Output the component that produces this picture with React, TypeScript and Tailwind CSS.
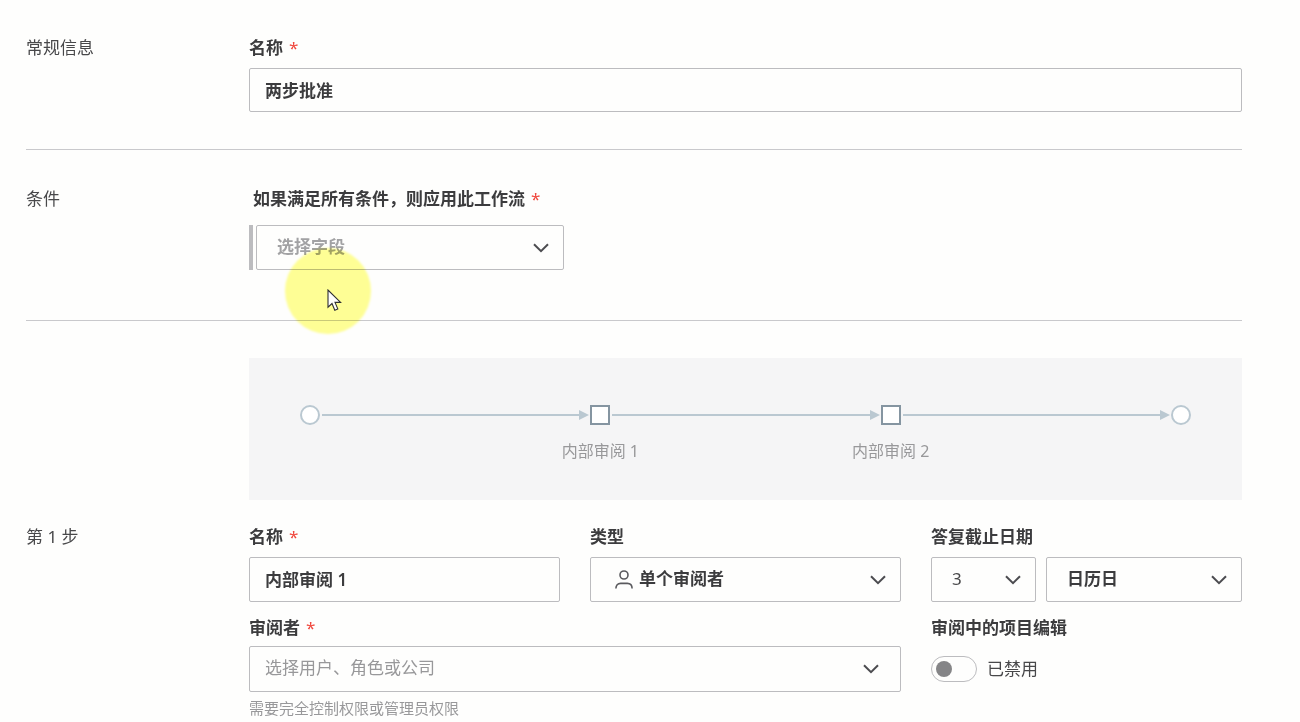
import { useState } from 'react'
import type { ReactNode, SelectHTMLAttributes } from 'react'

const LABEL = 'block text-[17px] leading-6 font-semibold text-[#3c3c3e]'
const BOX =
  'w-full rounded-xs border border-[#bcbcbf] bg-[#fefefd] pb-[2px] text-[17px] leading-6 outline-none focus:border-[#7d8a94]'

function Required() {
  return (
    <span className="ml-[6px] font-normal text-[#f0463c]" aria-hidden="true">
      *
    </span>
  )
}

function ChevronIcon() {
  return (
    <svg width="16" height="10" viewBox="0 0 16 10" fill="none">
      <path d="M1 1.2 8 8.2l7-7" stroke="#4c4c50" strokeWidth="2" />
    </svg>
  )
}

function PersonIcon() {
  return (
    <svg width="18" height="20" viewBox="0 0 18 20" fill="none" stroke="#5a5a5e" strokeWidth="1.6">
      <circle cx="9" cy="5" r="4" />
      <path d="M.9 18.6c0-3.4 1.8-5.2 4.8-5.2h6.6c3 0 4.8 1.8 4.8 5.2" />
    </svg>
  )
}

interface SelectBoxProps extends SelectHTMLAttributes<HTMLSelectElement> {
  options: string[]
  icon?: ReactNode
  wide?: boolean
}

function SelectBox({ options, icon, wide, className = '', ...rest }: SelectBoxProps) {
  return (
    <div className="relative flex-1">
      {icon && (
        <span className="pointer-events-none absolute inset-y-0 left-[25px] flex items-center">{icon}</span>
      )}
      <select className={`${BOX} appearance-none ${className}`} {...rest}>
        {options.map((option) => (
          <option key={option}>{option}</option>
        ))}
      </select>
      <span
        className={`pointer-events-none absolute inset-y-0 flex items-center ${wide ? 'right-[22px]' : 'right-[15px]'}`}
      >
        <ChevronIcon />
      </span>
    </div>
  )
}

function Section({ title, children, className = '' }: { title?: string; children: ReactNode; className?: string }) {
  return (
    <section className={`flex ${className}`}>
      <h2 className="w-[223px] shrink-0 text-[17px] leading-6 text-[#48484a]">{title}</h2>
      <div className="min-w-0 flex-1">{children}</div>
    </section>
  )
}

function Arrow() {
  return (
    <div className="ml-[2px] flex h-5 flex-1 items-center">
      <div className="h-[2px] flex-1 bg-[#bac8d1]" />
      <svg width="10" height="10" viewBox="0 0 10 10" className="mr-px">
        <path d="M0 0l10 5-10 5z" fill="#bac8d1" />
      </svg>
    </div>
  )
}

function StepNode({ name }: { name: string }) {
  return (
    <div className="flex w-5 flex-col items-center gap-[14px]">
      <div className="size-5 border-2 border-[#8595a1] bg-white" />
      <span className="text-base leading-6 whitespace-nowrap text-[#98989a]">{name}</span>
    </div>
  )
}

function WorkflowDiagram({ steps }: { steps: string[] }) {
  return (
    <div className="flex h-[142px] items-start bg-[#f5f5f6] px-[51px] pt-[47px]">
      <div className="size-5 rounded-full border-2 border-[#bac8d1] bg-white" />
      {steps.map((step) => (
        <div key={step} className="flex flex-1">
          <Arrow />
          <StepNode name={step} />
        </div>
      ))}
      <div className="flex flex-1">
        <Arrow />
        <div className="size-5 rounded-full border-2 border-[#bac8d1] bg-white" />
      </div>
    </div>
  )
}

function Pointer() {
  return (
    <div className="pointer-events-none absolute top-[62px] left-9">
      <div className="size-[86px] rounded-full bg-[#ffff96] blur-[1px]" />
      <svg width="15" height="23" viewBox="0 0 15 23" className="absolute top-[41px] left-[42px]">
        <path
          d="M1 1v17.2l4-3.7 2.8 6.7 3-1.3L8 13.4h5.6z"
          fill="#fff"
          stroke="#2f2f33"
          strokeWidth="1.1"
        />
      </svg>
    </div>
  )
}

export default function App() {
  const [name, setName] = useState('两步批准')
  const [stepName, setStepName] = useState('内部审阅 1')
  const [editing, setEditing] = useState(false)

  return (
    <form className="min-h-screen bg-[#fefefd] pr-[58px] pl-[26px] font-['Noto_Sans','Noto_Sans_CJK_SC',sans-serif]">
      <Section title="常规信息" className="border-b border-[#c9c9cc] pt-9 pb-[37px]">
        <label htmlFor="name" className={LABEL}>
          名称
          <Required />
        </label>
        <input
          id="name"
          className={`${BOX} mt-2 h-11 px-[15px] font-semibold text-[#3c3c3e]`}
          value={name}
          onChange={(e) => setName(e.target.value)}
        />
      </Section>

      <Section title="条件" className="border-b border-[#c9c9cc] pt-[37px] pb-[50px]">
        <label htmlFor="condition" className={`${LABEL} pl-1`}>
          如果满足所有条件，则应用此工作流
          <Required />
        </label>
        <div className="relative mt-[14px] w-[315px]">
          <div className="flex border-l-4 border-[#bcbcbf] pl-[3px]">
            <SelectBox
              id="condition"
              options={['选择字段']}
              className="h-[45px] pr-10 pl-5 font-semibold text-[#a2a2a4]"
            />
          </div>
          <div className="absolute -top-[39px] left-0 mix-blend-multiply">
            <Pointer />
          </div>
        </div>
      </Section>

      <Section className="pt-[37px]">
        <WorkflowDiagram steps={['内部审阅 1', '内部审阅 2']} />
      </Section>

      <Section title="第 1 步" className="pt-[25px]">
        <div className="grid grid-cols-3 gap-x-[30px] gap-y-[14px]">
          <div>
            <label htmlFor="step-name" className={LABEL}>
              名称
              <Required />
            </label>
            <input
              id="step-name"
              className={`${BOX} mt-2 h-[45px] px-[15px] font-semibold text-[#3c3c3e]`}
              value={stepName}
              onChange={(e) => setStepName(e.target.value)}
            />
          </div>
          <div>
            <label htmlFor="step-type" className={`${LABEL} mb-2`}>
              类型
            </label>
            <SelectBox
              id="step-type"
              icon={<PersonIcon />}
              options={['单个审阅者', '多个审阅者']}
              className="h-[45px] pr-10 pl-12 font-semibold text-[#3c3c3e]"
            />
          </div>
          <div>
            <label htmlFor="due" className={`${LABEL} mb-2`}>
              答复截止日期
            </label>
            <div className="flex gap-[10px]">
              <div className="flex w-[105px]">
                <SelectBox
                  id="due"
                  options={['3', '5', '7']}
                  className="h-[45px] pr-10 pl-5 text-[#48484a]"
                />
              </div>
              <SelectBox
                aria-label="日历日"
                options={['日历日', '工作日']}
                className="h-[45px] pr-10 pl-5 font-semibold text-[#3c3c3e]"
              />
            </div>
          </div>

          <div className="col-span-2">
            <label htmlFor="reviewer" className={`${LABEL} mb-[6px]`}>
              审阅者
              <Required />
            </label>
            <SelectBox
              id="reviewer"
              wide
              options={['选择用户、角色或公司']}
              className="h-[46px] pr-12 pl-[15px] text-[#98989a]"
            />
            <p className="mt-1 text-[15px] leading-6 text-[#98989a]">需要完全控制权限或管理员权限</p>
          </div>
          <div>
            <div className={LABEL}>审阅中的项目编辑</div>
            <label className="mt-4 flex items-center gap-[10px] text-[17px] leading-6 text-[#48484a]">
              <input
                type="checkbox"
                role="switch"
                checked={editing}
                onChange={(e) => setEditing(e.target.checked)}
                className="flex h-[26px] w-[46px] appearance-none items-center rounded-full border border-[#bcbcbf] px-1 before:size-4 before:rounded-full before:bg-[#858587] checked:justify-end"
              />
              {editing ? '已启用' : '已禁用'}
            </label>
          </div>
        </div>
      </Section>
    </form>
  )
}
